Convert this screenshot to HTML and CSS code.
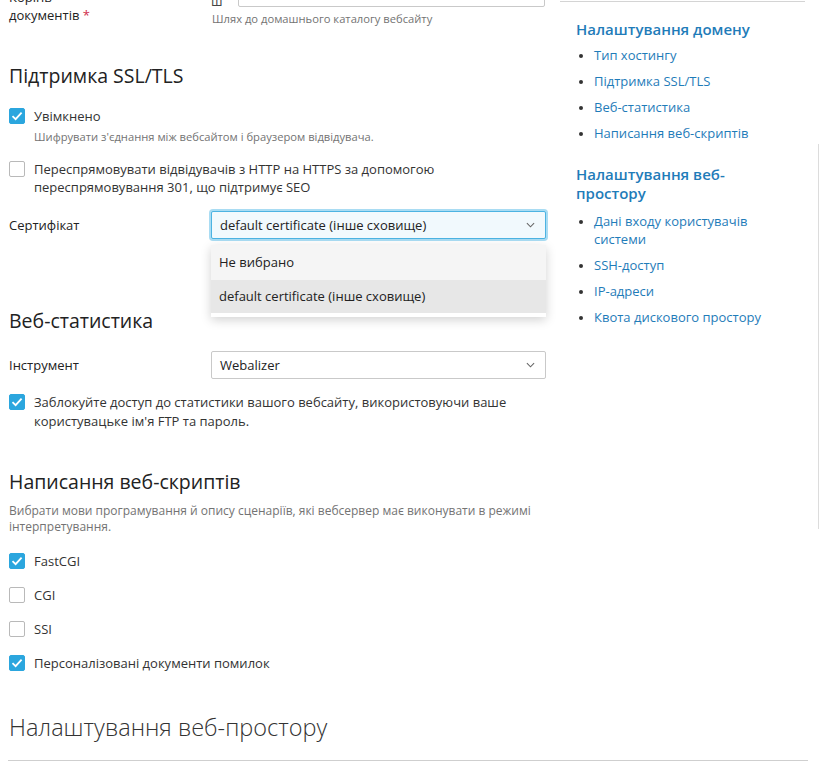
FILE: index.html
```html
<!DOCTYPE html>
<html lang="uk">
<head>
  <meta charset="UTF-8" />
  <title>Налаштування хостингу</title>
  <link rel="stylesheet" href="styles.css">
</head>
<body>
  <div class="page">
    <div class="columns">
      <div class="form">
        <div class="row row-docroot">
          <div class="label">Корінь<br>документів <span class="req">*</span></div>
          <div class="field">
            <div class="input-group">
              <span class="prefix">ш</span>
              <div class="input"></div>
            </div>
            <div class="hint">Шлях до домашнього каталогу вебсайту</div>
          </div>
        </div>

        <h2 class="section-title ssl-title">Підтримка SSL/TLS</h2>
        <label class="check-row">
          <span class="check on"><svg viewBox="0 0 16 16"><path d="M3.5 8.2 6.6 11.2 12.6 4.6" /></svg></span>
          <span>Увімкнено</span>
        </label>
        <div class="hint hint-indent">Шифрувати з'єднання між вебсайтом і браузером відвідувача.</div>
        <label class="check-row redirect-row">
          <span class="check"></span>
          <span>Переспрямовувати відвідувачів з HTTP на HTTPS за допомогою<br>переспрямовування 301, що підтримує SEO</span>
        </label>
        <div class="row row-cert">
          <div class="label">Сертифікат</div>
          <div class="field">
            <div class="select focused">
              <span>default certificate (інше сховище)</span>
              <svg class="chevron" viewBox="0 0 10 6"><path d="M1 1 5 5 9 1" /></svg>
            </div>
            <ul class="dropdown">
              <li>Не вибрано</li>
              <li class="active">default certificate (інше сховище)</li>
            </ul>
          </div>
        </div>

        <h2 class="section-title stats-title">Веб-статистика</h2>
        <div class="row row-tool">
          <div class="label">Інструмент</div>
          <div class="field">
            <div class="select">
              <span>Webalizer</span>
              <svg class="chevron" viewBox="0 0 10 6"><path d="M1 1 5 5 9 1" /></svg>
            </div>
          </div>
        </div>
        <label class="check-row protect-row">
          <span class="check on"><svg viewBox="0 0 16 16"><path d="M3.5 8.2 6.6 11.2 12.6 4.6" /></svg></span>
          <span>Заблокуйте доступ до статистики вашого вебсайту, використовуючи ваше<br>користувацьке ім'я FTP та пароль.</span>
        </label>

        <h2 class="section-title scripts-title">Написання веб-скриптів</h2>
        <div class="hint scripts-hint">Вибрати мови програмування й опису сценаріїв, які вебсервер має виконувати в режимі<br>інтерпретування.</div>
        <div class="check-list">
          <label class="check-row">
            <span class="check on"><svg viewBox="0 0 16 16"><path d="M3.5 8.2 6.6 11.2 12.6 4.6" /></svg></span>
            <span>FastCGI</span>
          </label>
          <label class="check-row">
            <span class="check"></span>
            <span>CGI</span>
          </label>
          <label class="check-row">
            <span class="check"></span>
            <span>SSI</span>
          </label>
          <label class="check-row">
            <span class="check on"><svg viewBox="0 0 16 16"><path d="M3.5 8.2 6.6 11.2 12.6 4.6" /></svg></span>
            <span>Персоналізовані документи помилок</span>
          </label>
        </div>

        <h2 class="section-title big-title">Налаштування веб-простору</h2>
      </div>

      <aside class="toc">
        <h3>Налаштування домену</h3>
        <ul>
          <li><a href="#">Тип хостингу</a></li>
          <li><a href="#">Підтримка SSL/TLS</a></li>
          <li><a href="#">Веб-статистика</a></li>
          <li><a href="#">Написання веб-скриптів</a></li>
        </ul>
        <h3>Налаштування веб-простору</h3>
        <ul class="second">
          <li><a href="#">Дані входу користувачів системи</a></li>
          <li><a href="#">SSH-доступ</a></li>
          <li><a href="#">IP-адреси</a></li>
          <li><a href="#">Квота дискового простору</a></li>
        </ul>
      </aside>

      <div class="scroll-edge"></div>
    </div>
    <hr class="rule">
  </div>
</body>
</html>
```

FILE: styles.css
```css
body {
  margin: 0;
  font-family: 'Open Sans', 'Noto Sans', sans-serif;
  font-size: 13px;
  line-height: 18px;
  color: #222;
  background: #fff;
  overflow: hidden;
}
.page {
  margin-top: -24px;
  padding-left: 9px;
}
.columns {
  display: flex;
  align-items: flex-start;
}
.form {
  width: 537px;
  flex: none;
}
.row {
  display: flex;
}
.label {
  width: 202px;
  flex: none;
}
.field {
  width: 335px;
  position: relative;
}
.req {
  color: #d02d4b;
}
.row-docroot .label {
  padding-top: 12px;
}
.input-group {
  display: flex;
  align-items: flex-end;
  height: 31px;
}
.prefix {
  width: 27px;
  color: #444;
  line-height: 12px;
}
.input {
  flex: 1;
  height: 28px;
  border: 1px solid #c9c9c9;
  border-radius: 2px;
  margin-right: 1px;
}
.hint {
  font-size: 11.2px;
  line-height: 16px;
  color: #737373;
}
.row-docroot .hint {
  margin-top: 4px;
  padding-left: 1px;
}
.section-title {
  margin: 0;
  font-size: 19.5px;
  line-height: 24px;
  font-weight: 400;
  color: #222;
}
.ssl-title {
  margin-top: 37px;
}
.check-row {
  display: flex;
  align-items: flex-start;
  gap: 9px;
  color: #333;
}
.check {
  width: 16px;
  height: 16px;
  box-sizing: border-box;
  border: 1px solid #b9b9b9;
  border-radius: 2px;
  background: #fff;
  flex: none;
  margin-top: 1px;
}
.check svg {
  display: block;
  width: 16px;
  height: 16px;
  margin: -1px;
}
.check svg path {
  fill: none;
  stroke: #fff;
  stroke-width: 1.8;
}
.check.on {
  background: #2ba6de;
  border-color: #2ba6de;
}
.ssl-title + .check-row {
  margin-top: 19px;
}
.hint-indent {
  margin-top: 4px;
  padding-left: 25px;
}
.redirect-row {
  margin-top: 15px;
}
.row-cert {
  margin-top: 15px;
}
.row-cert .label,
.row-tool .label {
  padding-top: 5px;
}
.select {
  height: 28px;
  box-sizing: border-box;
  border: 1px solid #c9c9c9;
  border-radius: 2px;
  display: flex;
  align-items: center;
  justify-content: space-between;
  padding: 0 10px 0 8px;
  color: #222;
  background: #fff;
}
.select.focused {
  border-color: #4cb3e2;
  background: #f1f9fd;
  box-shadow: 0 0 0 2px #a9dcf3;
}
.chevron {
  width: 9px;
  height: 6px;
}
.chevron path {
  fill: none;
  stroke: #666;
  stroke-width: 1.2;
}
.dropdown {
  position: absolute;
  left: 0;
  right: 0;
  top: 34px;
  margin: 0;
  padding: 0 0 4px;
  list-style: none;
  background: #fff;
  box-shadow: 0 3px 10px rgba(0, 0, 0, 0.18);
  z-index: 5;
}
.dropdown li {
  height: 35px;
  line-height: 35px;
  padding: 0 8px;
  background: #f5f5f5;
  color: #222;
}
.dropdown li.active {
  height: 33px;
  line-height: 33px;
  background: #e7e7e7;
}
.stats-title {
  margin-top: 70px;
}
.row-tool {
  margin-top: 18px;
}
.protect-row {
  margin-top: 14px;
  line-height: 19px;
}
.scripts-title {
  margin-top: 39px;
}
.scripts-hint {
  margin-top: 9px;
  font-size: 12px;
}
.check-list {
  margin-top: 17px;
  display: flex;
  flex-direction: column;
  gap: 16px;
}
.big-title {
  margin-top: 40px;
  font-size: 23.5px;
  line-height: 30px;
  font-weight: 300;
  color: #333;
}
.toc {
  width: 199px;
  flex: none;
  margin: 25px 0 0 14px;
  padding: 18px 30px 0 16px;
  border-top: 1px solid #d4d4d4;
}
.toc h3 {
  margin: 0;
  font-size: 15px;
  line-height: 19px;
  font-weight: 600;
  color: #1f7cb9;
}
.toc ul {
  margin: 7px 0 0;
  padding: 0 0 0 18px;
  display: flex;
  flex-direction: column;
  gap: 8px;
}
.toc ul.second {
  margin-top: 9px;
}
.toc li::marker {
  color: #333;
  font-size: 11px;
}
.toc ul + h3 {
  margin-top: 23px;
}
.toc a {
  color: #1f7cb9;
  text-decoration: none;
}
.scroll-edge {
  width: 0;
  height: 385px;
  margin: 168px 0 0 13px;
  border-left: 1px solid #dcdcdc;
}
.rule {
  width: 800px;
  margin: 18px 0 0 -1px;
  border: none;
  border-top: 1px solid #cfcfcf;
}
```
